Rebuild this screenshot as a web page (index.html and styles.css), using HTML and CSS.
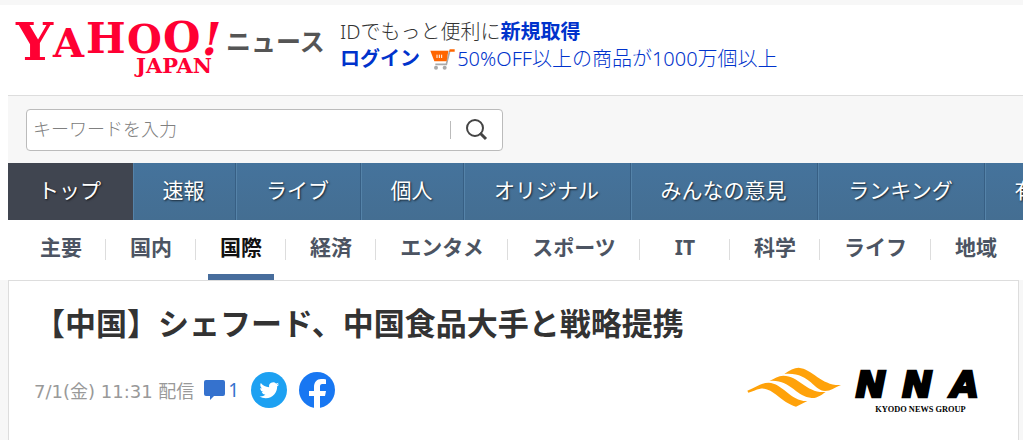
FILE: index.html
```html
<!DOCTYPE html>
<html lang="ja">
<head>
    <meta charset="UTF-8">
    <meta name="viewport" content="width=device-width, initial-scale=1.0">
    <title>【中国】シェフード、中国食品大手と戦略提携 - Yahoo!ニュース</title>
    <link rel="stylesheet" href="styles.css">
</head>
<body>

    <header class="site-header">
        <div class="masthead">
            <a class="logo" href="#">
                <svg class="logo-yahoo" width="205" height="56" viewBox="0 0 205 56" role="img" aria-label="Yahoo! JAPAN">
                    <g class="logo-letters">
                        <text x="0" y="42" font-size="52">Y</text>
                        <text x="37" y="39" font-size="40">A</text>
                        <text x="70" y="35" font-size="42">H</text>
                        <text x="111" y="35" font-size="40">O</text>
                        <text x="147" y="34" font-size="43">O</text>
                        <text x="186" y="37" font-size="44" font-style="italic">!</text>
                        <text x="120" y="55" font-size="21">JAPAN</text>
                    </g>
                </svg>
                <span class="logo-news">ニュース</span>
            </a>
            <div class="account">
                <p>IDでもっと便利に<a class="strong" href="#">新規取得</a></p>
                <p>
                    <a class="strong login" href="#">ログイン</a>
                    <a class="promo" href="#"><svg width="25" height="21" viewBox="0 0 75 63" aria-hidden="true">
                        <path d="M59 6L49 46H16" fill="none" stroke="#aaa" stroke-width="5"/>
                        <path d="M1 5h54l-5 32H13z" fill="#ff6600"/>
                        <path d="M21 17v10M28 17v10M35 17v10" stroke="#fff" stroke-width="3"/>
                        <path d="M59 1h15v7H57z" fill="#ff6600"/>
                        <circle cx="18" cy="56" r="6" fill="#aaa"/>
                        <circle cx="44" cy="56" r="6" fill="#aaa"/>
                    </svg>50%OFF以上の商品が1000万個以上</a>
                </p>
            </div>
        </div>

        <form class="search">
            <div class="search-box">
                <input type="text" aria-label="キーワード" placeholder="キーワードを入力">
                <button type="submit" aria-label="検索">
                    <svg width="22" height="22" viewBox="0 0 22 22" aria-hidden="true">
                        <circle cx="9" cy="9" r="8" fill="none" stroke="#444" stroke-width="2"/>
                        <path d="M14 14l6 6" stroke="#444" stroke-width="3"/>
                    </svg>
                </button>
            </div>
        </form>

        <nav class="main-nav">
            <a class="active" href="#">トップ</a>
            <a href="#">速報</a>
            <a href="#">ライブ</a>
            <a href="#">個人</a>
            <a href="#">オリジナル</a>
            <a href="#">みんなの意見</a>
            <a href="#">ランキング</a>
            <a href="#">有料</a>
        </nav>

        <nav class="sub-nav">
            <a href="#">主要</a>
            <a href="#">国内</a>
            <a class="active" href="#">国際</a>
            <a href="#">経済</a>
            <a href="#">エンタメ</a>
            <a href="#">スポーツ</a>
            <a href="#">IT</a>
            <a href="#">科学</a>
            <a href="#">ライフ</a>
            <a href="#">地域</a>
        </nav>
    </header>

    <article class="article">
        <h1>【中国】シェフード、中国食品大手と戦略提携</h1>
        <div class="article-meta">
            <time datetime="07-01T11:31">7/1(金) 11:31 配信</time>
            <a class="comments" href="#">
                <svg width="21" height="20" viewBox="0 0 21 20" aria-hidden="true">
                    <path d="M2 0h17a2 2 0 0 1 2 2v12a2 2 0 0 1-2 2H10l-4 4v-4H2a2 2 0 0 1-2-2V2a2 2 0 0 1 2-2z" fill="#3572ce"/>
                </svg>1
            </a>
            <a class="share" href="#" aria-label="Twitter">
                <svg width="36" height="36" viewBox="0 0 36 36" aria-hidden="true">
                    <circle cx="18" cy="18" r="18" fill="#1da1f2"/>
                    <path transform="translate(8.5 8.5) scale(.82)" fill="#fff" d="M23.953 4.57a10 10 0 01-2.825.775 4.958 4.958 0 002.163-2.723c-.951.555-2.005.959-3.127 1.184a4.92 4.92 0 00-8.384 4.482C7.69 8.095 4.067 6.13 1.64 3.162a4.822 4.822 0 00-.666 2.475c0 1.71.87 3.213 2.188 4.096a4.904 4.904 0 01-2.228-.616v.06a4.923 4.923 0 003.946 4.827 4.996 4.996 0 01-2.212.085 4.936 4.936 0 004.604 3.417 9.867 9.867 0 01-6.102 2.105c-.39 0-.779-.023-1.17-.067a13.995 13.995 0 007.557 2.209c9.053 0 13.998-7.496 13.998-13.985 0-.21 0-.42-.015-.63A9.935 9.935 0 0024 4.59z"/>
                </svg>
            </a>
            <a class="share" href="#" aria-label="Facebook">
                <svg width="36" height="36" viewBox="0 0 36 36" aria-hidden="true">
                    <circle cx="18" cy="18" r="18" fill="#1877f2"/>
                    <path fill="#fff" d="M15 36V24h-5v-5h5v-4c0-5 3-8 7-8 2 0 4 0 5 .4V12h-3c-3 0-3 1.500-3 3v4h6l-1 5h-5v12z"/>
                </svg>
            </a>
            <a class="publisher" href="#">
                <svg width="240" height="50" viewBox="36 30 720 150" role="img" aria-label="NNA Kyodo News Group">
                    <g fill="#ffa20a">
                        <path d="M148 57C163 46 178 38 191 38C232 42 262 94 318 90C298 98 288 108 270 108C236 108 224 50 148 57z"/>
                        <path d="M103 78C118 70 130 62 145 62C192 62 215 116 272 111C258 120 248 130 230 129C185 127 165 72 103 78z"/>
                        <path d="M37 107C60 99 78 83 101 83C142 84 168 140 217 138L183 155C135 142 116 98 76 101C62 103 52 110 40 113z"/>
                    </g>
                    <g class="nna-letters">
                        <text x="362" y="127">N</text>
                        <text x="502" y="127">N</text>
                        <text x="648" y="125">A</text>
                    </g>
                    <text class="nna-group" x="421" y="170">KYODO NEWS GROUP</text>
                </svg>
            </a>
        </div>
    </article>

</body>
</html>
```
FILE: styles.css
```css
* {
    box-sizing: border-box;
}

body {
    margin: 0;
    background-color: #f7f7f7;
    color: #333333;
    font-family: "Noto Sans", "Noto Sans CJK JP", sans-serif;
    font-size: 20px;
    overflow-x: hidden;
}

a {
    color: #0033cc;
    text-decoration: none;
}

a:hover {
    text-decoration: underline;
}

/* Header */
.site-header {
    border-left: 8px solid #ffffff;
}

.masthead {
    display: flex;
    align-items: flex-start;
    margin-top: 5px;
    padding: 13px 8px 22px;
    height: 91px;
    background-color: #ffffff;
    border-bottom: 1px solid #dddddd;
}

.logo {
    display: flex;
    align-items: flex-start;
    flex: none;
    width: 324px;
    gap: 5px;
}

.logo-yahoo {
    overflow: visible;
}

.logo-letters {
    fill: #ff0033;
    font-family: "DejaVu Serif", serif;
    font-weight: bold;
}

.logo-news {
    color: #555555;
    font-size: 25px;
    font-weight: bold;
    line-height: 46px;
    white-space: nowrap;
}

.account {
    font-weight: 300;
}

.account p {
    margin: 0;
    line-height: 27px;
    white-space: nowrap;
}

.strong {
    font-weight: bold;
}

.login {
    margin-right: 5px;
}

.promo svg {
    vertical-align: -4px;
    margin-right: 2px;
}

/* Search */
.search {
    padding: 13px 18px 12px;
}

.search-box {
    display: flex;
    align-items: center;
    max-width: 477px;
    height: 42px;
    background-color: #ffffff;
    border: 1px solid #bbbbbb;
    border-radius: 4px;
}

.search-box input {
    flex: 1;
    min-width: 0;
    padding: 0 6px 2px;
    border: none;
    outline: none;
    background: none;
    font-family: inherit;
    font-size: 18px;
}

.search-box input::placeholder {
    color: #808080;
    font-weight: 300;
}

.search-box button {
    display: flex;
    width: 52px;
    height: 18px;
    padding: 0 0 0 15px;
    align-items: center;
    border: none;
    border-left: 1px solid #bbbbbb;
    background: none;
    cursor: pointer;
}

.search-box svg {
    flex: none;
}

/* Navigation */
.main-nav {
    display: grid;
    grid-template-columns: 125px 103px 125px 103px 167px 187px 167px 103px;
    overflow: hidden;
    background: linear-gradient(#45739c, #446e92);
}

.main-nav a {
    padding: 0 2px 2px 0;
    border-left: 1px solid #5583a9;
    border-right: 1px solid #375f84;
    color: #ffffff;
    font-size: 21px;
    line-height: 55px;
    text-align: center;
    text-shadow: 1px 1px 2px rgba(0, 0, 0, 0.7);
    white-space: nowrap;
}

.main-nav .active {
    background-color: #404550;
    border-color: #404550;
}

.sub-nav {
    display: grid;
    grid-template-columns: 90px 90px 90px 90px 132px 132px 90px 90px 111px 90px;
    height: 60px;
    padding-left: 8px;
    overflow: hidden;
    background-color: #ffffff;
}

.sub-nav a {
    position: relative;
    color: #4c5462;
    font-size: 21px;
    font-weight: bold;
    line-height: 55px;
    text-align: center;
    background: linear-gradient(#dddddd, #dddddd) no-repeat right 19px / 1px 21px;
}

.sub-nav a:last-child {
    background: none;
}

.sub-nav .active {
    color: #111111;
}

.sub-nav .active::after {
    content: "";
    position: absolute;
    left: 12px;
    right: 12px;
    bottom: 0;
    height: 6px;
    background-color: #476d9c;
}

/* Article */
.article {
    margin: 0 4px 0 8px;
    padding: 22px 31px 40px 25px;
    background-color: #ffffff;
    border: 1px solid #dddddd;
}

.article h1 {
    margin: 0;
    font-size: 31px;
    line-height: 40px;
}

.article-meta {
    display: flex;
    align-items: center;
    height: 50px;
    margin-top: 22px;
}

.article-meta svg {
    display: block;
    overflow: visible;
}

.article-meta time {
    color: #999999;
    font-family: "DejaVu Sans", "Noto Sans CJK JP", sans-serif;
    font-size: 18px;
}

.comments {
    display: flex;
    align-items: center;
    gap: 3px;
    margin: 0 12px 0 10px;
    color: #3572ce;
    font-size: 19px;
}

.share {
    margin-right: 12px;
}

.publisher {
    margin-left: auto;
}

.nna-letters {
    fill: #000000;
    stroke: #000000;
    stroke-width: 8px;
    font-family: "DejaVu Sans", sans-serif;
    font-size: 108px;
    font-style: italic;
    font-weight: bold;
}

.nna-group {
    fill: #000000;
    font-family: "Liberation Serif", serif;
    font-size: 25px;
    font-weight: bold;
}
```
